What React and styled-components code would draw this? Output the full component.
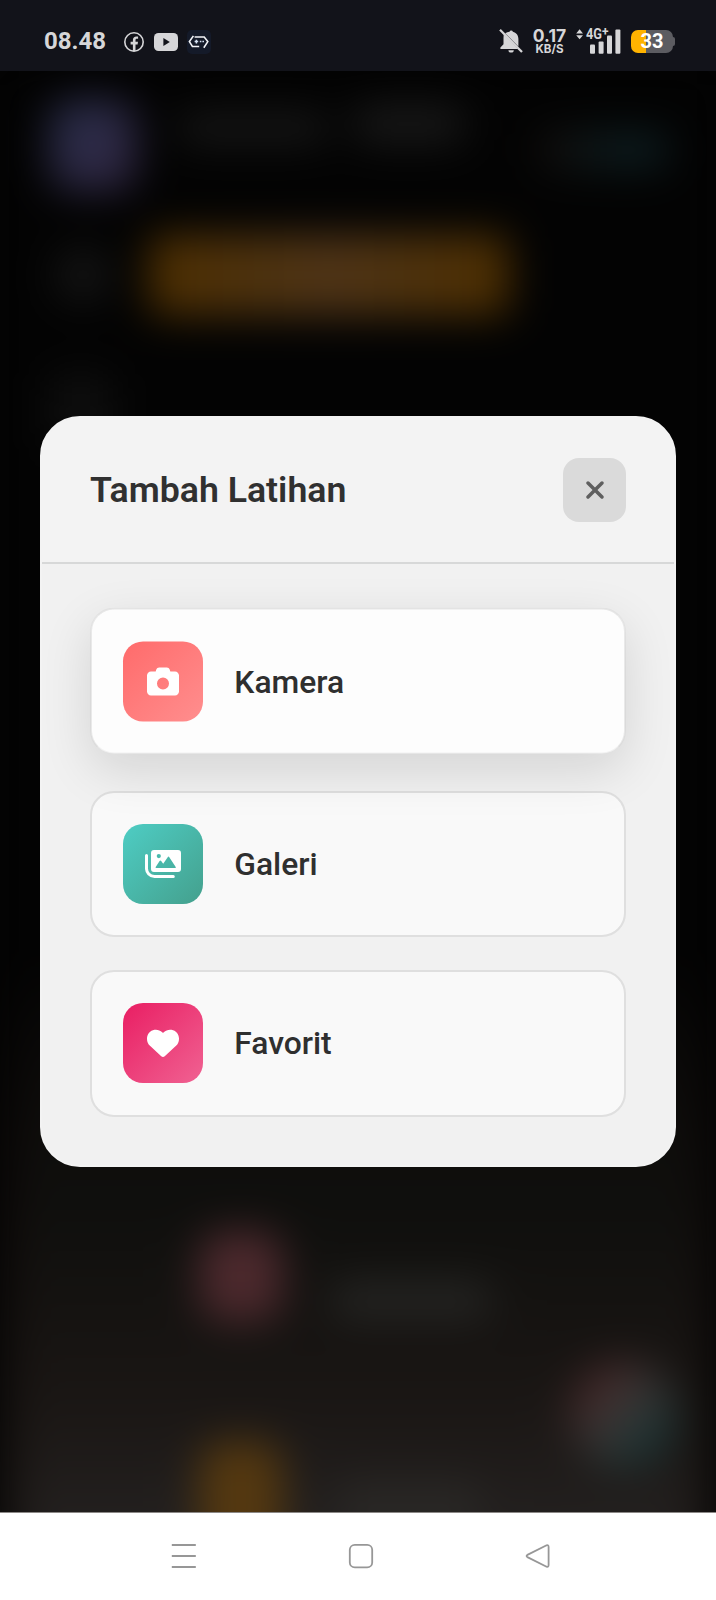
import React from 'react';
import styled, { createGlobalStyle, css } from 'styled-components';
import { FaCamera, FaHeart, FaXmark } from 'react-icons/fa6';

const GlobalStyle = createGlobalStyle`
  *, *::before, *::after { box-sizing: border-box; }
  body { margin: 0; background: #000; font-family: Roboto, sans-serif; }
  button { font: inherit; color: inherit; margin: 0; cursor: pointer; text-align: left; }
`;

const Screen = styled.div`
  display: flex;
  flex-direction: column;
  width: 716px;
  height: 1600px;
  overflow: hidden;
`;

/* ---------- status bar ---------- */

const StatusBar = styled.header`
  flex: none;
  display: flex;
  align-items: center;
  justify-content: space-between;
  height: 71px;
  padding: 12px 41px 0 44px;
  background: #12131a;
  color: #d6d6d8;
`;

const StatusGroup = styled.div`
  display: flex;
  align-items: center;
  gap: ${(p) => p.$gap}px;

  svg { display: block; flex: none; overflow: visible; }
`;

const Clock = styled.span`
  width: 69px;
  padding-bottom: 2px;
  font-size: 24px;
  line-height: 24px;
  font-weight: 700;
`;

const NetSpeed = styled.div`
  display: flex;
  flex-direction: column;
  align-items: center;
  width: 35px;
  font-family: Inter, Roboto, sans-serif;
  font-weight: 700;
`;

const SpeedValue = styled.span`
  font-size: 17.5px;
  line-height: 16px;
  letter-spacing: 0.1px;
`;

const SpeedUnit = styled.span`
  font-size: 11.6px;
  line-height: 11px;
`;

const SignalText = styled.text`
  font-family: Roboto, sans-serif;
  font-size: ${(p) => p.$size}px;
  font-weight: 700;
  fill: #d6d6d8;
`;

const Battery = styled.div`
  display: flex;
  align-items: center;
`;

const BatteryBody = styled.div`
  display: flex;
  align-items: center;
  justify-content: center;
  width: 42px;
  height: 23px;
  border-radius: 7px;
  background: linear-gradient(90deg, #ffb300 15px, #5c5c61 15px);
  color: #fff;
  font-size: 20px;
  line-height: 23px;
  font-weight: 700;
`;

const BatteryTip = styled.i`
  width: 2px;
  height: 9px;
  border-radius: 0 2px 2px 0;
  background: #5c5c61;
`;

/* ---------- page behind the dialog ---------- */

const Stage = styled.main`
  position: relative;
  flex: none;
  height: 1441px;
  overflow: hidden;
  background: #030303;
`;

const DimmedPage = styled.div`
  display: flex;
  flex-direction: column;
  height: 1540px;
  padding: 28px 38px 0 49px;
  background: linear-gradient(180deg, #030303 0, #030303 880px, #0d0a09 1080px, #161210 1300px, #1c1816 1441px);
  filter: blur(20px);
`;

const Profile = styled.div`
  display: flex;
  align-items: flex-start;
  height: 92px;
`;

const Avatar = styled.div`
  flex: none;
  width: 88px;
  height: 92px;
  border-radius: 24px;
  background: linear-gradient(135deg, #272d49, #312642);
`;

const Smudge = styled.div`
  flex: none;
  width: ${(p) => p.$w}px;
  height: ${(p) => p.$h}px;
  margin: ${(p) => p.$m || 0};
  border-radius: ${(p) => p.$r || 14}px;
  background: ${(p) => p.$bg};
`;

const ActionRow = styled.div`
  display: flex;
  align-items: center;
  gap: 46px;
  height: 80px;
  margin-top: 44px;
`;

const LowerPanel = styled.section`
  height: 620px;
  margin: 660px -8px 0 -18px;
  padding: 256px 0 0 168px;
  background: linear-gradient(180deg, rgba(16, 16, 14, 0) 0, #0f0f0d 230px, #1a1614 420px, #242120 560px);
`;

const ListLine = styled.div`
  display: flex;
  align-items: center;
  gap: 56px;
  height: 90px;
  margin-bottom: 135px;
`;

const FloatingAction = styled.div`
  position: absolute;
  left: 570px;
  top: 1290px;
  width: 106px;
  height: 106px;
  border-radius: 50%;
  background: linear-gradient(135deg, #452627 20%, #363534 50%, #143334 85%);
`;

/* ---------- dialog ---------- */

const Overlay = styled.div`
  position: absolute;
  inset: 0;
  display: flex;
  align-items: flex-start;
  justify-content: center;
  padding-top: 345px;
`;

const Dialog = styled.section`
  width: 636px;
  height: 751px;
  border: 2px solid #f3f3f3;
  border-radius: 40px;
  background: #f1f1f1;
  overflow: hidden;
`;

const DialogHeader = styled.div`
  display: flex;
  align-items: center;
  justify-content: space-between;
  height: 146px;
  padding: 0 47.6px 0 48px;
  border-bottom: 2px solid #d7d8d8;
  background: #f3f3f3;
`;

const DialogTitle = styled.h2`
  margin: 0;
  color: #303030;
  font-size: 35.7px;
  line-height: 44px;
  font-weight: 600;
`;

const CloseButton = styled.button`
  display: flex;
  align-items: center;
  justify-content: center;
  width: 63.3px;
  height: 63.3px;
  padding: 0;
  border: 0;
  border-radius: 16px;
  background: #dadada;
  color: #5f5f5f;
`;

const Options = styled.div`
  display: flex;
  flex-direction: column;
  gap: 32.6px;
  padding: 47.3px 48px 0;
`;

const Option = styled.button`
  display: flex;
  align-items: center;
  gap: 31px;
  width: 100%;
  height: 146.7px;
  padding: 0 31.3px;
  border: 2px solid #dfdfdf;
  border-radius: 24px;
  background: rgba(255, 255, 255, 0.6);
  background-clip: padding-box;
  color: #2f2f2f;
  font-size: 31.8px;
  line-height: 40px;
  font-weight: 500;

  ${(p) => p.$raised && css`
    transform: translateY(-3.5px);
    border-color: rgba(0, 0, 0, 0.04) rgba(0, 0, 0, 0.03) rgba(0, 0, 0, 0);
    background-color: #fdfdfd;
    box-shadow: 0 16px 50px rgba(0, 0, 0, 0.12);
  `}
`;

const IconTile = styled.span`
  flex: none;
  display: flex;
  align-items: center;
  justify-content: center;
  width: 80px;
  height: 80px;
  border-radius: 20px;
  background: linear-gradient(135deg, ${(p) => p.$from}, ${(p) => p.$to});
  color: #fff;
  font-size: 32px;
`;

/* ---------- navigation bar ---------- */

const NavBar = styled.nav`
  flex: 1;
  display: flex;
  justify-content: center;
  gap: 150.5px;
  padding: 30px 0 0 6px;
  border-top: 1px solid #8c8987;
  background: #fff;

  svg { display: block; flex: none; fill: none; stroke: #979797; stroke-width: 1.8; }
`;

const ImagesIcon = () => (
  <svg width="36" height="28" viewBox="0 0 36 28" fill="currentColor">
    <path
      fillRule="evenodd"
      d="M9 0h24a3 3 0 0 1 3 3v16a3 3 0 0 1-3 3H9a3 3 0 0 1-3-3V3a3 3 0 0 1 3-3zM11.8 18h18.4q1 0 .5-.9L24.3 7.2q-.8-1.2-1.6 0l-4.5 6.5-2-2.6q-.8-1-1.6 0l-3.9 6q-.5.9.4.9zM13.8 4a2.1 2.1 0 1 0 0 4.2 2.1 2.1 0 0 0 0-4.2z"
    />
    <path d="M1.5 5.5V18a8 8 0 0 0 8 8.4h18.8" fill="none" stroke="currentColor" strokeWidth="3" strokeLinecap="round" />
  </svg>
);

const OPTIONS = [
  { label: 'Kamera', Icon: FaCamera, from: '#ff6b6b', to: '#ff8e8e', raised: true },
  { label: 'Galeri', Icon: ImagesIcon, from: '#4ecdc4', to: '#44a08d' },
  { label: 'Favorit', Icon: FaHeart, from: '#e91e63', to: '#f06292' },
];

const FacebookIcon = () => (
  <svg width="20" height="20" viewBox="0 0 20 20">
    <circle cx="10" cy="10" r="9.2" fill="none" stroke="#d6d6d8" strokeWidth="1.6" />
    <path d="M8.9 19v-6.6H6.6V9.8h2.3V8.1c0-2.5 1.4-3.7 3.5-3.7.7 0 1.3.1 1.7.2v2.2h-1.2c-1.1 0-1.4.6-1.4 1.4v1.6h2.5l-.4 2.6h-2.1V19z" fill="#d6d6d8" />
  </svg>
);

const YoutubeIcon = () => (
  <svg width="24" height="18" viewBox="0 0 24 18">
    <rect width="24" height="18" rx="4.5" fill="#d6d6d8" />
    <path d="M9.4 5v8l6.4-4z" fill="#12131a" />
  </svg>
);

const BracketIcon = () => (
  <svg width="24" height="24" viewBox="0 0 24 24">
    <rect width="24" height="24" rx="5" fill="#141a29" />
    <g fill="none" stroke="#f2f4f8" strokeWidth="1.6">
      <path d="M6.4 5.9 2.4 11.6l3 4.9h6.8" />
      <path d="M7.6 7h9.6l3.6 4.6-4 6.2" />
    </g>
    <path d="M9.4 9.8v3.6M7.6 11.6h3.6M12.8 11.6h1.6M15.4 11.6H17" stroke="#d6e2f4" strokeWidth="1.5" />
  </svg>
);

const BellOffIcon = () => (
  <svg width="24" height="25" viewBox="0 0 24 25">
    <path d="M6.2 4.3C7.6 3.4 9 3 10.5 2.7a1.8 1.8 0 0 1 3.4 0c3.3.8 5.5 3.7 5.5 7.2v7.6z" fill="#d6d6d8" />
    <path d="M4.8 5.2 18.9 20H1.4v-1.5l3.1-3.2v-5.2c0-1 .1-3.9.3-4.9zM9.4 21.2h5.4a2.7 2.3 0 0 1-5.4 0z" fill="#d6d6d8" />
    <path d="M1 .8 23 23" stroke="#d6d6d8" strokeWidth="2.2" />
  </svg>
);

const SignalIcon = () => (
  <svg width="45" height="25" viewBox="0 0 45 25">
    <path d="M.2 4.4 3.6.2 7 4.4zM.2 6.2 3.6 10.2 7 6.2z" fill="#d6d6d8" />
    <SignalText $size={14} x="10" y="10.4" textLength="16" lengthAdjust="spacingAndGlyphs">4G</SignalText>
    <SignalText $size={12} x="26" y="7.4">+</SignalText>
    <g fill="#d6d6d8">
      <rect x="14" y="15.5" width="5" height="9.2" rx="1" />
      <rect x="22.6" y="12.5" width="5" height="12.2" rx="1" />
      <rect x="31" y="6.5" width="5" height="18.2" rx="1" />
      <rect x="39.4" y=".5" width="5" height="24.2" rx="1" />
    </g>
  </svg>
);

export default function App() {
  return (
    <Screen>
      <GlobalStyle />
      <StatusBar>
        <StatusGroup $gap={11}>
          <Clock>08.48</Clock>
          <StatusGroup $gap={9.5}>
            <FacebookIcon />
            <YoutubeIcon />
            <BracketIcon />
          </StatusGroup>
        </StatusGroup>
        <StatusGroup $gap={9}>
          <BellOffIcon />
          <NetSpeed>
            <SpeedValue>0.17</SpeedValue>
            <SpeedUnit>KB/S</SpeedUnit>
          </NetSpeed>
          <StatusGroup $gap={10}>
            <SignalIcon />
            <Battery>
              <BatteryBody>33</BatteryBody>
              <BatteryTip />
            </Battery>
          </StatusGroup>
        </StatusGroup>
      </StatusBar>

      <Stage>
        <DimmedPage aria-hidden="true">
          <Profile>
            <Avatar />
            <Smudge $w={152} $h={30} $m="14px 0 0 40px" $bg="#181818" />
            <Smudge $w={112} $h={38} $m="6px 0 0 24px" $bg="#191919" />
            <Smudge $w={132} $h={38} $m="32px 0 0 72px" $bg="linear-gradient(90deg, #120d0b, #0d1c1f 60%)" />
          </Profile>
          <ActionRow>
            <Smudge $w={56} $h={56} $m="0 0 0 6px" $r={28} $bg="#141414" />
            <Smudge $w={362} $h={82} $m="0 0 0 -9px" $bg="linear-gradient(90deg, #4c2e00, #4e3417 50%, #4c2e00)" />
          </ActionRow>
          <Smudge $w={64} $h={76} $m="58px 0 -134px" $bg="#0e0e0e" />
          <LowerPanel>
            <ListLine>
              <Smudge $w={84} $h={90} $r={26} $bg="#4c292d" />
              <Smudge $w={160} $h={36} $m="48px 0 0 -8px" $bg="#252523" />
            </ListLine>
            <ListLine>
              <Smudge $w={84} $h={120} $r={26} $bg="#543810" />
              <Smudge $w={140} $h={60} $m="20px 0 0" $bg="#292725" />
            </ListLine>
          </LowerPanel>
          <FloatingAction />
        </DimmedPage>

        <Overlay>
          <Dialog role="dialog" aria-labelledby="dialog-title">
            <DialogHeader>
              <DialogTitle id="dialog-title">Tambah Latihan</DialogTitle>
              <CloseButton aria-label="Tutup">
                <FaXmark size={28} />
              </CloseButton>
            </DialogHeader>
            <Options>
              {OPTIONS.map(({ label, Icon, from, to, raised }) => (
                <Option key={label} $raised={raised}>
                  <IconTile $from={from} $to={to}>
                    <Icon />
                  </IconTile>
                  {label}
                </Option>
              ))}
            </Options>
          </Dialog>
        </Overlay>
      </Stage>

      <NavBar>
        <svg width="27" height="27" viewBox="0 0 27 27">
          <path d="M1.8 2h24M1.8 13h24M1.8 24h24" />
        </svg>
        <svg width="27" height="27" viewBox="0 0 27 27">
          <rect x="1.8" y="1.8" width="22.4" height="22.6" rx="5" />
        </svg>
        <svg width="27" height="27" viewBox="0 0 27 27">
          <path d="M21.6 2.3 2.4 11.9q-1.6 1.1 0 2.2l19.2 9.6q2 .6 2-1.6V3.9q0-2.2-2-1.6z" strokeLinejoin="round" />
        </svg>
      </NavBar>
    </Screen>
  );
}
